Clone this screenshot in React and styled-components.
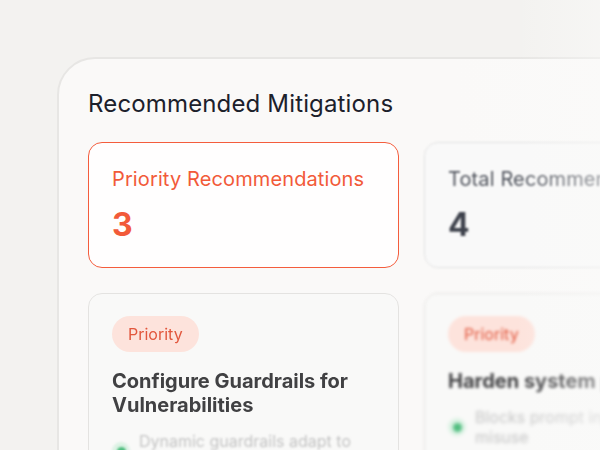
import styled, { createGlobalStyle } from "styled-components";

const GlobalStyle = createGlobalStyle`
  html, body {
    margin: 0;
    padding: 0;
    background: #f3f2f0;
    overflow: hidden;
  }
  body {
    font-family: Inter, "Noto Sans", sans-serif;
    -webkit-font-smoothing: antialiased;
  }
`;

const mitigations = [
  {
    id: "guardrails",
    title: "Configure Guardrails for Vulnerabilities",
    point: "Dynamic guardrails adapt to emerging threats",
    blur: 0.7,
  },
  {
    id: "harden",
    title: "Harden system prompts",
    point: "Blocks prompt injection and misuse",
    blur: 1.4,
  },
];

export default function App() {
  return (
    <>
      <GlobalStyle />
      <StyledPage>
        <StyledPanel>
          <StyledTitle>Recommended Mitigations</StyledTitle>
          <StyledGrid>
            <StyledStatCard $active>
              <StyledStatLabel $active>Priority Recommendations</StyledStatLabel>
              <StyledStatValue $active>3</StyledStatValue>
            </StyledStatCard>
            <StyledStatCard $blur={0.8}>
              <StyledStatLabel>Total Recommendations</StyledStatLabel>
              <StyledStatValue>4</StyledStatValue>
            </StyledStatCard>
            {mitigations.map((item) => (
              <StyledMitigation key={item.id} $blur={item.blur}>
                <StyledBadge>Priority</StyledBadge>
                <StyledMitigationTitle>{item.title}</StyledMitigationTitle>
                <StyledPoint>
                  <StyledDot />
                  <StyledPointText>{item.point}</StyledPointText>
                </StyledPoint>
              </StyledMitigation>
            ))}
          </StyledGrid>
        </StyledPanel>
      </StyledPage>
    </>
  );
}

const StyledPage = styled.div`
  position: relative;
  width: 600px;
  height: 450px;
  overflow: hidden;
  padding: 57px 0 0 57px;
  box-sizing: border-box;

  /* soft fade over the right edge */
  &::after {
    content: "";
    position: absolute;
    inset: 0;
    pointer-events: none;
    background: linear-gradient(
      90deg,
      rgba(250, 250, 249, 0) 86%,
      rgba(250, 250, 249, 0.45) 100%
    );
  }
`;

const StyledPanel = styled.section`
  width: 720px;
  min-height: 500px;
  box-sizing: border-box;
  padding: 30px 29px;
  border: 2px solid #e7e6e4;
  border-radius: 38px;
  background: linear-gradient(90deg, #faf9f8 0%, #faf9f8 55%, #fbfbfa 100%);
`;

const StyledTitle = styled.h2`
  margin: 0 0 23px;
  font-size: 24px;
  line-height: 30px;
  font-weight: 400;
  letter-spacing: 0.15px;
  color: #1c202b;
`;

const StyledGrid = styled.div`
  display: grid;
  grid-template-columns: 311px 311px;
  column-gap: 25px;
  row-gap: 25px;
`;

const StyledStatCard = styled.div`
  box-sizing: border-box;
  height: 126px;
  padding: 23px 23px 0;
  border-radius: 14px;
  border: 1px solid ${({ $active }) => ($active ? "#f45d3d" : "#e2e2e2")};
  background: ${({ $active }) => ($active ? "#fffefe" : "#f9f9f9")};
  filter: ${({ $blur }) => ($blur ? `blur(${$blur}px)` : "none")};
`;

const StyledStatLabel = styled.div`
  font-size: 20px;
  line-height: 26px;
  letter-spacing: 0.12px;
  white-space: nowrap;
  color: ${({ $active }) => ($active ? "#f25a39" : "#50545d")};
`;

const StyledStatValue = styled.div`
  margin-top: 15px;
  font-size: 32px;
  line-height: 36px;
  font-weight: 700;
  color: ${({ $active }) => ($active ? "#f25a39" : "#3e424c")};
`;

const StyledMitigation = styled.div`
  box-sizing: border-box;
  min-height: 200px;
  padding: 22px 23px;
  border-radius: 14px;
  border: 1px solid #e4e3e1;
  background: #f9f9f8;
  filter: blur(${({ $blur }) => $blur}px);
`;

const StyledBadge = styled.span`
  display: inline-flex;
  align-items: center;
  height: 36px;
  padding: 0 16px;
  border-radius: 18px;
  background: #fde3dc;
  color: #e2573d;
  font-size: 16px;
`;

const StyledMitigationTitle = styled.h3`
  margin: 17px 0 0;
  font-size: 20px;
  line-height: 24px;
  font-weight: 700;
  color: #414143;
  filter: blur(0.5px);
`;

const StyledPoint = styled.div`
  display: flex;
  align-items: center;
  gap: 9px;
  margin-top: 14px;
  filter: blur(1.3px);
`;

const StyledDot = styled.span`
  flex: none;
  width: 18px;
  height: 18px;
  border-radius: 50%;
  background: #dcf2e4;
  display: flex;
  align-items: center;
  justify-content: center;

  &::after {
    content: "";
    width: 9px;
    height: 9px;
    border-radius: 50%;
    background: #4fbd7e;
  }
`;

const StyledPointText = styled.span`
  font-size: 16px;
  line-height: 20px;
  color: #c4c4c4;
`;
